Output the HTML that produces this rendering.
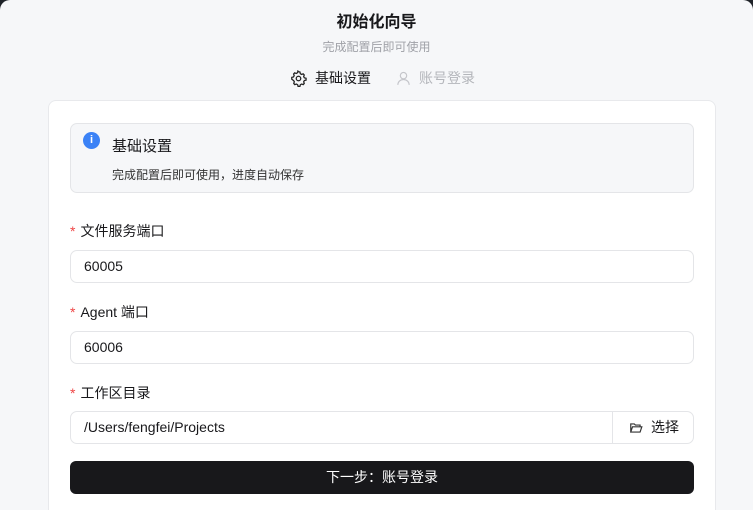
<!DOCTYPE html>
<html><head><meta charset="utf-8"><style>
*{box-sizing:border-box;margin:0;padding:0}
html,body{width:753px;height:510px;overflow:hidden;background:#1e2228}
body{font-family:"Liberation Sans","Noto Sans CJK SC",sans-serif;color:#18181b;position:relative}
.win{position:absolute;left:0;top:0;width:753px;height:510px;background:#f6f7f9;border-radius:10px 10px 0 0;overflow:hidden}
.t{position:absolute;width:100%;text-align:center}
.card{position:absolute;left:48px;top:100px;width:668px;height:430px;background:#fff;border:1px solid #e8e9ec;border-radius:8px}
.alert{position:absolute;left:70px;top:123px;width:624px;height:70px;background:#f6f7f9;border:1px solid #e4e5e8;border-radius:7px}
.lbl{position:absolute;left:70px;font-size:14px;color:#18181b}
.lbl b{color:#ef4444;font-weight:normal;margin-right:5px}
.inp{position:absolute;left:70px;width:624px;height:33px;border:1px solid #e4e5e8;border-radius:7px;font-size:14px;line-height:31px;padding-left:13px;background:#fff}
.btn{position:absolute;left:70px;top:461px;width:624px;height:33px;background:#18181b;border-radius:6px;color:#fff;font-size:14px;text-align:center;line-height:33px}
</style></head><body>
<div class="win">
<div class="t" style="top:8px;font-size:16px;font-weight:bold">初始化向导</div>
<div class="t" style="top:38px;font-size:12px;color:#a0a2a8">完成配置后即可使用</div>
<div style="position:absolute;left:290px;top:68px;font-size:14px;display:flex;align-items:center">
<svg width="17" height="17" viewBox="0 0 24 24" fill="none" stroke="#222" stroke-width="1.8"><path d="M12 2.5l2 .3.6 2.4 1.7 1 2.4-.8 1.4 1.6-.8 2.4 1 1.7 2.4.6v2.6l-2.4.6-1 1.7.8 2.4-1.4 1.6-2.4-.8-1.700 1-.6 2.4h-2.6l-.6-2.4-1.7-1-2.4.8-1.4-1.6.8-2.4-1-1.7L2.5 13v-2.6l2.4-.6 1-1.7-.8-2.4L6.5 4.1l2.4.8 1.7-1 .6-2.4z"/><circle cx="12" cy="12" r="3.2"/></svg>
<span style="margin-left:8px">基础设置</span>
<svg style="margin-left:24px" width="17" height="17" viewBox="0 0 24 24" fill="none" stroke="#c4c5ca" stroke-width="1.6"><circle cx="12" cy="8" r="4.5"/><path d="M4 21c0-4.5 3.5-7.5 8-7.5s8 3 8 7.5"/></svg>
<span style="margin-left:7px;color:#b4b6bb">账号登录</span>
</div>
<div class="card"></div>
<div class="alert"></div>
<div style="position:absolute;left:83px;top:132px;width:17px;height:17px;border-radius:50%;background:#3b82f6;color:#fff;font-size:11px;font-weight:bold;text-align:center;line-height:17px">i</div>
<div style="position:absolute;left:112px;top:135px;font-size:15px">基础设置</div>
<div style="position:absolute;left:112px;top:166px;font-size:12px;color:#333">完成配置后即可使用，进度自动保存</div>
<div class="lbl" style="top:221px"><b>*</b>文件服务端口</div>
<div class="inp" style="top:250px">60005</div>
<div class="lbl" style="top:302px"><b>*</b>Agent 端口</div>
<div class="inp" style="top:331px">60006</div>
<div class="lbl" style="top:383px"><b>*</b>工作区目录</div>
<div class="inp" style="top:411px">/Users/fengfei/Projects</div>
<div style="position:absolute;left:612px;top:411px;width:82px;height:33px;border-left:1px solid #e4e5e8;font-size:14px;line-height:33px;padding-left:16px;display:flex;align-items:center">
<svg width="14" height="14" viewBox="0 0 24 24" fill="none" stroke="#333" stroke-width="2"><path d="M3 19V5h6l2 2h8v3M3 19l3-9h16l-3 9z"/></svg><span style="margin-left:8px">选择</span></div>
<div class="btn">下一步：账号登录</div>
</div>
</body></html>
